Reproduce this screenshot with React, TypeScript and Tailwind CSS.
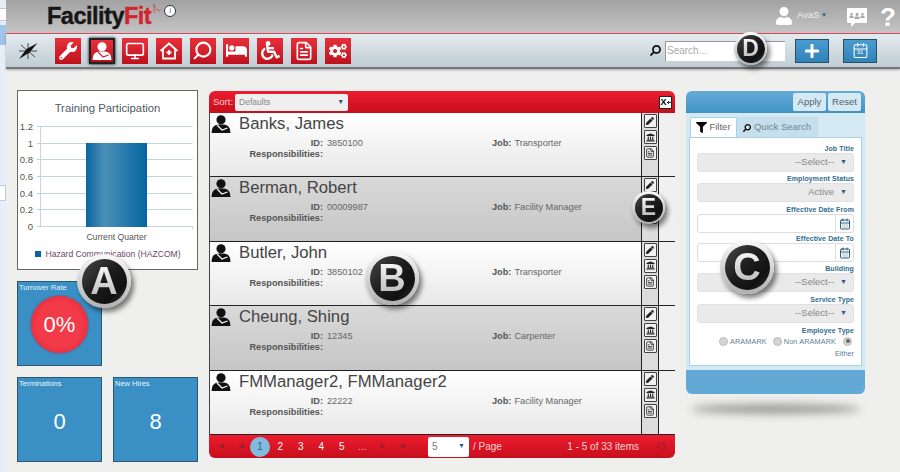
import React from "react";
import { FaWrench, FaBed, FaWheelchair, FaCogs, FaPen, FaUniversity, FaFilter, FaSearch, FaUser, FaPlus } from "react-icons/fa";
import { Monitor, Search, FileText, Calendar, RotateCw, CalendarDays } from "lucide-react";

const font = { fontFamily: '"Liberation Sans", Arial, sans-serif' };

function Badge({ letter, size, className }: { letter: string; size: number; className: string }) {
  const big = size > 40;
  return (
    <div className={`absolute z-20 rounded-full bg-linear-to-b from-[#fafafa] to-[#b0b0b0] flex items-center justify-center shadow-[3px_4px_5px_rgba(0,0,0,0.5)] ${big ? "w-[54px] h-[54px]" : "w-[33px] h-[33px]"} ${className}`}>
      <div className={`rounded-full bg-[linear-gradient(135deg,#4a4a4a_0%,#1e1e1e_45%,#111_75%,#333_100%)] flex items-center justify-center font-bold ${big ? "w-[45px] h-[45px] text-[38px]" : "w-[28px] h-[28px] text-[23px]"}`}>
        <span className="bg-linear-to-b from-white to-[#b5b5b5] bg-clip-text text-transparent leading-none">{letter}</span>
      </div>
    </div>
  );
}

function Person({ fill, line, w = 20, h = 18 }: { fill: string; line: string; w?: number; h?: number }) {
  return (
    <svg width={w} height={h} viewBox="0 0 20 18">
      <circle cx="10" cy="4.800" r="4.600" fill={fill} />
      <path d="M0.500 18 Q0.500 10 7 9.500 L13 9.500 Q19.500 10 19.500 18 Z" fill={fill} />
      <path d="M6 10 L11 15 L16.500 13" stroke={line} strokeWidth="1.200" fill="none" />
    </svg>
  );
}

function NavBtn({ children, active }: { children: React.ReactNode; active?: boolean }) {
  return (
    <div className={`w-[26px] h-[26px] flex items-center justify-center text-white bg-linear-to-b from-[#e8303c] to-[#bd101c] ${active ? "border-2 border-[#222] shadow-[0_0_3px_#000]" : ""}`}>
      {children}
    </div>
  );
}

function ActionBtn({ children }: { children: React.ReactNode }) {
  return (
    <div className="w-[13px] h-[14px] border border-[#444] bg-[#f0f0f0] rounded-[1px] flex items-center justify-center text-[#222]">
      {children}
    </div>
  );
}

function Row({ name, id, job, alt }: { name: string; id: string; job: string; alt?: boolean }) {
  return (
    <div className={`flex h-[64.5px] border-b border-[#222] ${alt ? "bg-linear-to-b from-[#d9d9d9] to-[#c6c6c6]" : "bg-linear-to-b from-white to-[#e8e8e8]"}`}>
      <div className="w-[29px] pl-[1px] pt-[2px]"><Person fill="#111" line="#fff" /></div>
      <div className="flex-1 text-[#666] pt-[1px]">
        <div className="text-[16.700px] leading-[20px] text-[#444]">{name}</div>
        <div className="grid grid-cols-[84px_169px_1fr] mt-[4px] text-[9.200px] leading-[11px]">
          <div className="text-right font-bold text-[#555]">ID:</div>
          <div className="pl-[4px]">{id}</div>
          <div><b className="mr-[3px] text-[#555]">Job:</b>{job}</div>
          <div className="text-right font-bold whitespace-nowrap text-[#555]">Responsibilities:</div>
        </div>
      </div>
      <div className="w-[16px] border-l border-r border-[#222] bg-[#dcdcdc] box-content flex flex-col items-center gap-[2px] pt-[1px]">
        <ActionBtn><FaPen size={8} /></ActionBtn>
        <ActionBtn><FaUniversity size={9} /></ActionBtn>
        <ActionBtn><FileText size={10} /></ActionBtn>
      </div>
      <div className="w-[16px] bg-[#f0f0f0]" />
    </div>
  );
}

function Tile({ title, children }: { title: string; children: React.ReactNode }) {
  return (
    <div className="relative w-[85px] h-[85px] bg-[#3a8fc5] border border-[#33556b] text-white">
      <div className="text-[7.500px] leading-[9px] pl-[1px] pt-[1px] text-[#e8f4fb]">{title}</div>
      {children}
    </div>
  );
}

function Label({ children, gap }: { children: React.ReactNode; gap: string }) {
  return <div className={`text-right text-[7px] leading-[9px] font-bold text-[#2f6d8f] tracking-[0.1px] ${gap}`}>{children}</div>;
}

function Sel({ value }: { value: string }) {
  return (
    <div className="h-[19px] rounded-[3px] bg-[#eaeaea] border border-[#e0e0e0] flex items-center justify-end pr-[6px] text-[9.500px] text-[#888]">
      {value}<span className="ml-[6px] text-[7px] text-[#2b5f7c]">▼</span>
    </div>
  );
}

function DateInput() {
  return (
    <div className="h-[19px] rounded-[3px] bg-white border border-[#ddd] flex justify-end">
      <div className="w-[18px] border-l border-[#ddd] flex items-center justify-center text-[#2b5f7c]">
        <CalendarDays size={12} />
      </div>
    </div>
  );
}

function Radio({ on }: { on?: boolean }) {
  return (
    <span className="inline-flex items-center justify-center w-[9px] h-[9px] rounded-full bg-[#d4d4d4] border border-[#bbb]">
      {on && <span className="w-[4px] h-[4px] rounded-full bg-[#666]" />}
    </span>
  );
}

function Chart() {
  const grid = [126, 143, 159, 176, 193, 209, 226];
  const labels = ["1.2", "1", "0.8", "0.6", "0.4", "0.2", "0"];
  return (
    <svg width="178" height="177" viewBox="18 91 178 177" style={font}>
      <defs>
        <linearGradient id="bar" x1="0" x2="1" y1="0" y2="0">
          <stop offset="0" stopColor="#0a659f" />
          <stop offset="0.3" stopColor="#4b90b9" />
          <stop offset="1" stopColor="#04659f" />
        </linearGradient>
      </defs>
      <text x="107.500" y="112" textAnchor="middle" fontSize="11.300" fill="#4d5a66">Training Participation</text>
      {grid.map((y, i) => (
        <g key={y}>
          <line x1="37" x2="192.500" y1={y + 0.5} y2={y + 0.5} stroke="#c4d5d8" />
          <text x="33" y={y + 3.5} textAnchor="end" fontSize="9.500" fill="#555">{labels[i]}</text>
        </g>
      ))}
      <line x1="40.500" x2="40.500" y1="126" y2="227" stroke="#c4d5d8" />
      <line x1="192.500" x2="192.500" y1="226" y2="229" stroke="#c4d5d8" />
      <rect x="86" y="143" width="61" height="84" fill="url(#bar)" />
      <text x="116.500" y="240" textAnchor="middle" fontSize="8.600" fill="#555">Current Quarter</text>
      <rect x="35" y="251" width="6" height="6" fill="#04659f" />
      <text x="45.500" y="257" fontSize="8.600" fill="#6a4a6a">Hazard Communication (HAZCOM)</text>
    </svg>
  );
}

export default function App() {
  return (
    <div className="relative w-[900px] h-[472px] overflow-hidden flex bg-[#efefee]" style={font}>
      {/* left sliver */}
      <div className="w-[6px] shrink-0 bg-[#e6eff8] flex flex-col">
        <div className="h-[8px]" />
        <div className="h-[13px] bg-white border-y border-[#c8c8c8]" />
        <div className="h-[4px]" />
        <div className="h-[20px] bg-[#9fc4e8]" />
        <div className="h-[140px]" />
        <div className="h-[16px] bg-white border-y border-r border-[#b5cfe6]" />
      </div>

      <div className="flex-1 flex flex-col min-w-0">
        {/* header */}
        <div className="h-[34px] shrink-0 bg-linear-to-b from-[#a2a2a2] to-[#c4c4c4] border-b border-[#dd4a5c] flex items-start">
          <div className="ml-[41px] mt-[2px] text-[23.500px] leading-[28px] font-bold tracking-[-0.5px] text-[#161616] [-webkit-text-stroke:0.4px_currentColor]">
            Facility<span className="text-[#d3242e]">Fit</span>
          </div>
          <svg width="9" height="10" viewBox="0 0 9 10" className="ml-[1px] mt-[4px]" fill="none" stroke="#c8303a" strokeWidth="0.700">
            <path d="M1 1 H3 L1.500 3 H3.500 L2 5 Q1.500 8 3 9 M4 6 Q5 4 6 6 Q7 8 8.500 6" />
          </svg>
          <div className="ml-[3px] mt-[5px] w-[12px] h-[12px] rounded-full bg-white border border-[#333] text-[8px] leading-[10px] text-center text-[#3366cc]">i</div>
          <div className="ml-auto flex items-start">
            <FaUser size={18} className="text-white mt-[7px]" />
            <span className="ml-[4px] mt-[9px] w-[22px] text-[9.500px] leading-[12px] text-[#eee]">AvaS</span>
            <span className="ml-[2px] mt-[11px] w-[6px] text-[6px] leading-[9px] text-[#2b5f7c]">▼</span>
            <div className="ml-[20px] mt-[8px] relative w-[20px] h-[15px] bg-white rounded-[1px] flex items-center justify-center text-[#aaa]">
              <FaUser size={5} />
              <FaUser size={6} />
              <FaUser size={5} />
              <div className="absolute -bottom-[4px] left-[4px] w-0 h-0 border-t-[5px] border-t-white border-r-[5px] border-r-transparent" />
            </div>
            <span className="ml-[13px] mr-[6px] w-[14px] text-[26px] leading-[34px] font-bold text-white">?</span>
          </div>
        </div>

        {/* toolbar */}
        <div className="h-[35px] shrink-0 bg-linear-to-b from-[#e4ebee] to-[#bfcdd4] border-b-[2px] border-[#777] shadow-[0_1px_2px_rgba(0,0,0,0.3)] flex items-center">
          <svg width="20" height="18" viewBox="0 0 20 18" className="ml-[12px] mr-[17px]" stroke="#222" strokeWidth="0.800">
            <path d="M10 1 V17 M1 9 H19 M3 3 L17 15 M4 15 L8 11" />
            <path d="M19.500 1 L11.500 10.500 L1 17 L8.500 7 Z" fill="#111" stroke="none" />
          </svg>
          <div className="flex gap-[7.700px]">
            <NavBtn><FaWrench size={18} /></NavBtn>
            <NavBtn active><Person fill="#fff" line="#d02030" /></NavBtn>
            <NavBtn><Monitor size={20} strokeWidth={2} /></NavBtn>
            <NavBtn>
              <svg width="20" height="20" viewBox="0 0 20 20" fill="none" stroke="white" strokeWidth="1.800">
                <path d="M1.500 10 L10 2.500 L18.500 10 M4 8.500 V17.500 H16 V8.500 M10 9 V14 M7.500 11.500 H12.500" />
              </svg>
            </NavBtn>
            <NavBtn><Search size={21} strokeWidth={2.400} className="-scale-x-100" /></NavBtn>
            <NavBtn><FaBed size={21} /></NavBtn>
            <NavBtn><FaWheelchair size={19} /></NavBtn>
            <NavBtn><FileText size={20} /></NavBtn>
            <NavBtn><FaCogs size={18} /></NavBtn>
          </div>
          <div className="ml-auto flex items-center">
            <FaSearch size={11} className="text-[#111] scale-x-[-1]" />
            <div className="ml-[4px] w-[120px] h-[20px] bg-white border-t border-l border-[#999] text-[10px] leading-[18px] pl-[1px] text-[#aaa]">Search...</div>
            <div className="ml-[10px] w-[34px] h-[24px] bg-linear-to-b from-[#4a9bd0] to-[#2f83b9] border border-[#2b4f66] flex items-center justify-center text-white">
              <FaPlus size={16} />
            </div>
            <div className="ml-[14px] mr-[23px] w-[34px] h-[24px] bg-linear-to-b from-[#4a9bd0] to-[#2f83b9] border border-[#2b4f66] flex items-center justify-center text-white">
              <div className="relative">
                <Calendar size={17} strokeWidth={1.500} />
                <span className="absolute inset-x-0 top-[6px] text-center text-[6px] leading-[8px]">31</span>
              </div>
            </div>
          </div>
        </div>

        {/* body */}
        <div className="flex-1 flex items-start pt-[21px] pl-[11px] min-h-0">
          {/* dashboard column */}
          <div className="w-[181px] shrink-0 grid grid-cols-[85px_85px] gap-x-[11px] gap-y-[11px] content-start">
            <div className="col-span-2 w-[181px] h-[180px] bg-white border border-[#666]"><Chart /></div>
            <Tile title="Turnover Rate">
              <div className="absolute left-[13px] top-[14px] w-[57px] h-[57px] rounded-full bg-[radial-gradient(circle,#f23a48_55%,#e0202e_100%)] shadow-[0_0_2px_rgba(180,0,20,0.8)] flex items-center justify-center text-[22px] text-white">0%</div>
            </Tile>
            <div />
            <Tile title="Terminations">
              <div className="absolute inset-0 flex items-center justify-center text-[22px] pt-[3px]">0</div>
            </Tile>
            <Tile title="New Hires">
              <div className="absolute inset-0 flex items-center justify-center text-[22px] pt-[3px]">8</div>
            </Tile>
          </div>

          {/* list */}
          <div className="ml-[11px] mt-[1px] w-[466px] shrink-0 h-[367px] flex flex-col rounded-[6px] overflow-hidden">
            <div className="h-[22px] shrink-0 bg-linear-to-b from-[#ee1c2e] to-[#c60f1c] flex items-center pl-[4px] pr-[3px] text-[9.500px] text-[#f5d0d0]">
              <span>Sort:</span>
              <div className="ml-[2px] w-[113px] h-[17px] bg-[#efefef] rounded-[2px] flex items-center justify-between px-[4px] text-[8.500px] text-[#888]">
                Defaults<span className="text-[7px] text-[#2b5f7c]">▼</span>
              </div>
              <div className="ml-auto w-[13px] h-[13px] border border-[#222] bg-white flex items-center justify-center text-black">
                <span className="text-[9px] font-bold leading-none">X</span>
                <svg width="4" height="5" viewBox="0 0 4 5" stroke="#000" fill="none" strokeWidth="0.800">
                  <path d="M0 2.500 H4 M2 1 L0.500 2.500 L2 4" />
                </svg>
              </div>
            </div>
            <div className="border-l border-[#444] flex-1 min-h-0 flex flex-col">
              <Row name="Banks, James" id="3850100" job="Transporter" />
              <Row name="Berman, Robert" id="00009987" job="Facility Manager" alt />
              <Row name="Butler, John" id="3850102" job="Transporter" />
              <Row name="Cheung, Shing" id="12345" job="Carpenter" alt />
              <Row name="FMManager2, FMManager2" id="22222" job="Facility Manager" />
            </div>
            <div className="h-[23px] shrink-0 bg-linear-to-b from-[#ee1c2e] to-[#c60f1c] flex items-center text-white text-[10px]">
              <div className="flex items-center w-[208px] pl-[1px] text-[#97202a] text-[7px]">
                <span className="w-[20px] text-center">◀</span>
                <span className="w-[20px] text-center">◀</span>
                <span className="w-[20px] h-[20px] rounded-full bg-[#80bcde] text-[#34617f] text-[10px] flex items-center justify-center">1</span>
                <span className="w-[20.500px] text-center text-[10px] text-white">2</span>
                <span className="w-[20.500px] text-center text-[10px] text-white">3</span>
                <span className="w-[20.500px] text-center text-[10px] text-white">4</span>
                <span className="w-[20.500px] text-center text-[10px] text-white">5</span>
                <span className="w-[20.500px] text-center text-[10px] text-[#f2b0b0]">...</span>
                <span className="w-[20.500px] text-center">▶</span>
                <span className="w-[20.500px] text-center">▶</span>
              </div>
              <div className="ml-[11px] w-[41px] h-[20px] bg-white rounded-[2px] flex items-center justify-between px-[4px] text-[#777]">
                5<span className="text-[7px] text-[#2b5f7c]">▼</span>
              </div>
              <span className="ml-[4px] text-[#f7d5d5]">/ Page</span>
              <span className="ml-auto text-[10px] text-[#f7d5d5]">1 - 5 of 33 items</span>
              <RotateCw size={9} className="ml-[18px] mr-[9px] text-[#7a2a2a]" />
            </div>
          </div>

          {/* filter */}
          <div className="ml-[11px] mt-[1px] w-[179px] shrink-0 flex flex-col">
            <div className="h-[303px] rounded-[6px] overflow-hidden flex flex-col bg-[#d5e9f3]">
              <div className="h-[22px] shrink-0 bg-linear-to-b from-[#65acd7] to-[#3f93c5] flex items-center justify-end gap-[2px] pr-[4px] text-[9.500px] text-[#4d6672]">
                <div className="w-[33px] h-[18px] rounded-[2px] bg-[#d5e9f3] flex items-center justify-center">Apply</div>
                <div className="w-[33px] h-[18px] rounded-[2px] bg-[#d5e9f3] flex items-center justify-center">Reset</div>
              </div>
              <div className="flex-1 min-h-0 px-[3px] pt-[4px] pb-[4px] flex flex-col">
                <div className="flex pl-[1px] h-[20px] shrink-0 text-[9.500px] text-[#777]">
                  <div className="w-[47px] bg-white border-t border-l border-r border-[#a9d2e8] rounded-t-[2px] flex items-center justify-center gap-[2px] text-[#666]">
                    <FaFilter size={11} className="text-black" /> Filter
                  </div>
                  <div className="w-[81px] bg-[#c6dfec] border-t border-r border-[#c0dcea] flex items-center justify-center gap-[3px] text-[#6e8792]">
                    <FaSearch size={8} className="text-black scale-x-[-1]" /> Quick Search
                  </div>
                </div>
                <div className="flex-1 min-h-0 bg-white border border-[#a9d2e8] pl-[7px] pr-[7px] pt-[6px]">
                  <Label gap="">Job Title</Label>
                  <Sel value="--Select--" />
                  <Label gap="mt-[2px]">Employment Status</Label>
                  <Sel value="Active" />
                  <Label gap="mt-[3px]">Effective Date From</Label>
                  <DateInput />
                  <Label gap="mt-[1px]">Effective Date To</Label>
                  <DateInput />
                  <Label gap="mt-[2px]">Building</Label>
                  <Sel value="--Select--" />
                  <Label gap="mt-[3px]">Service Type</Label>
                  <Sel value="--Select--" />
                  <Label gap="mt-[3px]">Employee Type</Label>
                  <div className="mt-[1px] h-[10px] flex items-center justify-end text-[7.300px] tracking-[0.1px] leading-[10px] text-[#5d7f95] pr-[2px]">
                    <Radio /><span className="ml-[2px] mr-[6px] pt-[2px]">ARAMARK</span>
                    <Radio /><span className="ml-[2px] mr-[7px] pt-[2px]">Non ARAMARK</span>
                    <Radio on />
                  </div>
                  <div className="text-right text-[7.300px] leading-[10px] mt-[3px] text-[#5d7f95]">Either</div>
                </div>
              </div>
              <div className="h-[24px] shrink-0 bg-[#63a9d5]" />
            </div>
            <div className="mt-[10px] mx-[5px] h-[10px] rounded-[50%] bg-[#9a9a9a] blur-[4px]" />
          </div>
        </div>
      </div>

      <Badge letter="A" size={54} className="left-[77px] top-[254px]" />
      <Badge letter="B" size={54} className="left-[365px] top-[251px]" />
      <Badge letter="C" size={54} className="left-[720px] top-[240px]" />
      <Badge letter="D" size={33} className="left-[734px] top-[32px]" />
      <Badge letter="E" size={33} className="left-[632px] top-[191px]" />
    </div>
  );
}
